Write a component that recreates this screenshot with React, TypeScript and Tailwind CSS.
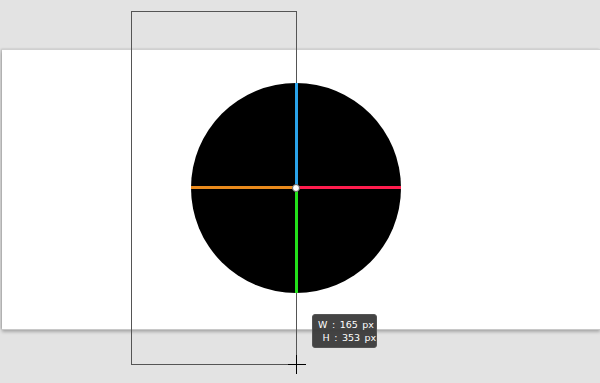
export default function App() {
  return (
    <div className="relative w-[600px] h-[383px] overflow-hidden bg-[#e3e3e3] font-['DejaVu_Sans',sans-serif]">
      {/* canvas */}
      <div className="mt-[49px] ml-[2px] h-[280px] bg-white pl-[189px] pt-[33px] shadow-[0_1px_0_#c8c8c8,0_3px_3px_rgba(0,0,0,0.25),-1px_0_2px_rgba(0,0,0,0.2)] border-t border-[#d0d0d0]">
        <div className="relative z-10 w-[210px] h-[210px] rounded-full bg-black">
          <div className="absolute left-[104px] top-0 w-[3px] h-[105px] bg-[#2aa3ea]" />
          <div className="absolute left-[104px] top-[105px] w-[3px] h-[105px] bg-[#22e01a]" />
          <div className="absolute left-0 top-[103px] w-[105px] h-[3px] bg-[#ea8a1c]" />
          <div className="absolute left-[105px] top-[103px] w-[105px] h-[3px] bg-[#ff1d4e]" />
          <div className="absolute left-[101px] top-[101px] w-[8px] h-[8px] rounded-full bg-white border border-[#666]" />
        </div>
      </div>

      {/* selection marquee */}
      <div className="absolute left-[131px] top-[11px] w-[166px] h-[354px] border border-[#555]" />

      {/* crosshair cursor */}
      <div className="absolute left-[288px] top-[364px] w-[18px] h-px bg-black" />
      <div className="absolute left-[296px] top-[355px] w-px h-[19px] bg-black" />

      {/* size tooltip */}
      <div className="absolute z-20 left-[312px] top-[314px] w-[65px] h-[34px] rounded-[3px] bg-[#3a3a3a]/95 border border-[#555] flex flex-col justify-center pl-[5px] text-[9.5px] leading-[13px] text-white [word-spacing:1.5px]">
        <div className="whitespace-pre">W : 165 px</div>
        <div className="whitespace-pre"> H : 353 px</div>
      </div>
    </div>
  );
}
